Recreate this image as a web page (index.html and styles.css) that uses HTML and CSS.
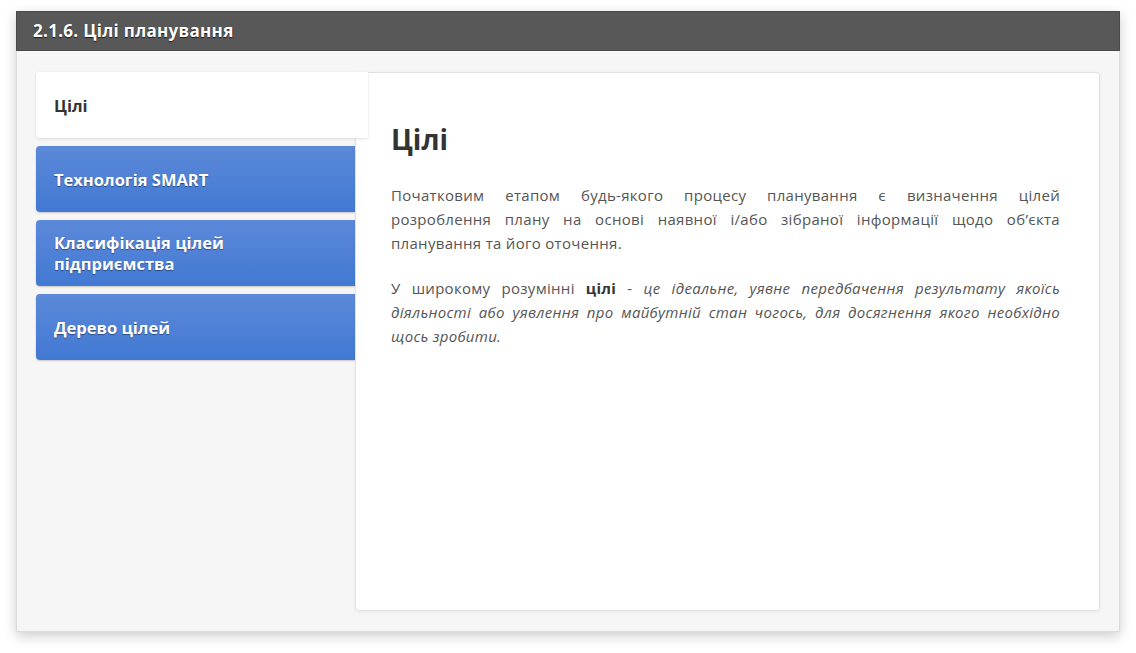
FILE: index.html
```html
<!DOCTYPE html>
<html lang="uk">
<head>
<meta charset="utf-8">
<title>2.1.6. Цілі планування</title>
<link rel="stylesheet" href="styles.css">
</head>
<body>
<div class="panel">
  <div class="panel-head">2.1.6. Цілі планування</div>
  <div class="panel-body">
    <div class="tabs">
      <div class="tab active">Цілі</div>
      <div class="tab">Технологія SMART</div>
      <div class="tab">Класифікація цілей<br>підприємства</div>
      <div class="tab">Дерево цілей</div>
    </div>
    <div class="content">
      <h1 class="content-title">Цілі</h1>
      <p class="text">Початковим етапом будь-якого процесу планування є визначення цілей розроблення&nbsp;плану на основі наявної і/або зібраної інформації щодо об’єкта планування та його оточення.</p>
      <p class="text">У широкому розумінні <b>цілі</b> - <i>це ідеальне, уявне передбачення результату якоїсь діяльності або уявлення про майбутній стан чогось, для досягнення якого необхідно щось зробити.</i></p>
    </div>
  </div>
</div>
</body>
</html>
```

FILE: styles.css
```css
html, body {
  margin: 0;
  padding: 0;
  background: #ffffff;
}
body {
  padding: 11px 16px 20px 16px;
  font-family: "Open Sans", "Noto Sans", sans-serif;
}
.panel {
  width: 1104px;
  height: 621px;
  box-sizing: border-box;
  background: #f6f6f6;
  border: 1px solid #dcdcdc;
  box-shadow: 0 4px 12px rgba(0, 0, 0, 0.2);
  display: flex;
  flex-direction: column;
}
.panel-head {
  height: 40px;
  flex: none;
  box-sizing: border-box;
  margin: -1px -1px 0 -1px;
  background: #585858;
  border: 1px solid #4a4a4a;
  color: #ffffff;
  font-weight: 700;
  font-size: 17px;
  letter-spacing: 0.3px;
  line-height: 38px;
  padding-left: 16px;
  text-shadow: 0 1px 1px rgba(0, 0, 0, 0.7);
}
.panel-body {
  flex: 1;
  display: flex;
  padding: 21px 19px 20px 19px;
  min-height: 0;
}
.tabs {
  width: 319px;
  flex: none;
  display: flex;
  flex-direction: column;
  gap: 8px;
}
.tab {
  height: 66px;
  box-sizing: border-box;
  display: flex;
  align-items: center;
  padding-left: 18px;
  font-weight: 700;
  font-size: 16.5px;
  line-height: 21px;
  color: #ffffff;
  border-radius: 4px 0 0 4px;
  background: linear-gradient(to bottom, #5c89d9 0%, #4279d3 100%);
  box-shadow: 0 1px 2px rgba(0, 0, 0, 0.2);
  text-shadow: 0 1px 1px rgba(0, 0, 0, 0.4);
}
.tab.active {
  position: relative;
  z-index: 2;
  margin-right: -13px;
  background: #ffffff;
  color: #333333;
  text-shadow: none;
  border-radius: 3px 0 0 3px;
  box-shadow: 0 1px 3px rgba(0, 0, 0, 0.12);
}
.content {
  flex: 1;
  background: #ffffff;
  border: 1px solid #e2e2e2;
  border-radius: 3px;
  box-shadow: 0 1px 3px rgba(0, 0, 0, 0.06);
  padding: 48px 39px 0 35px;
  position: relative;
  z-index: 1;
}
.content-title {
  margin: 0 0 26px 0;
  font-size: 28px;
  line-height: 36px;
  font-weight: 700;
  color: #333333;
}
.text {
  margin: 0 0 21px 0;
  font-size: 15px;
  letter-spacing: 0.3px;
  line-height: 24px;
  color: #555555;
  text-align: justify;
}
.text b {
  color: #333333;
}
```
